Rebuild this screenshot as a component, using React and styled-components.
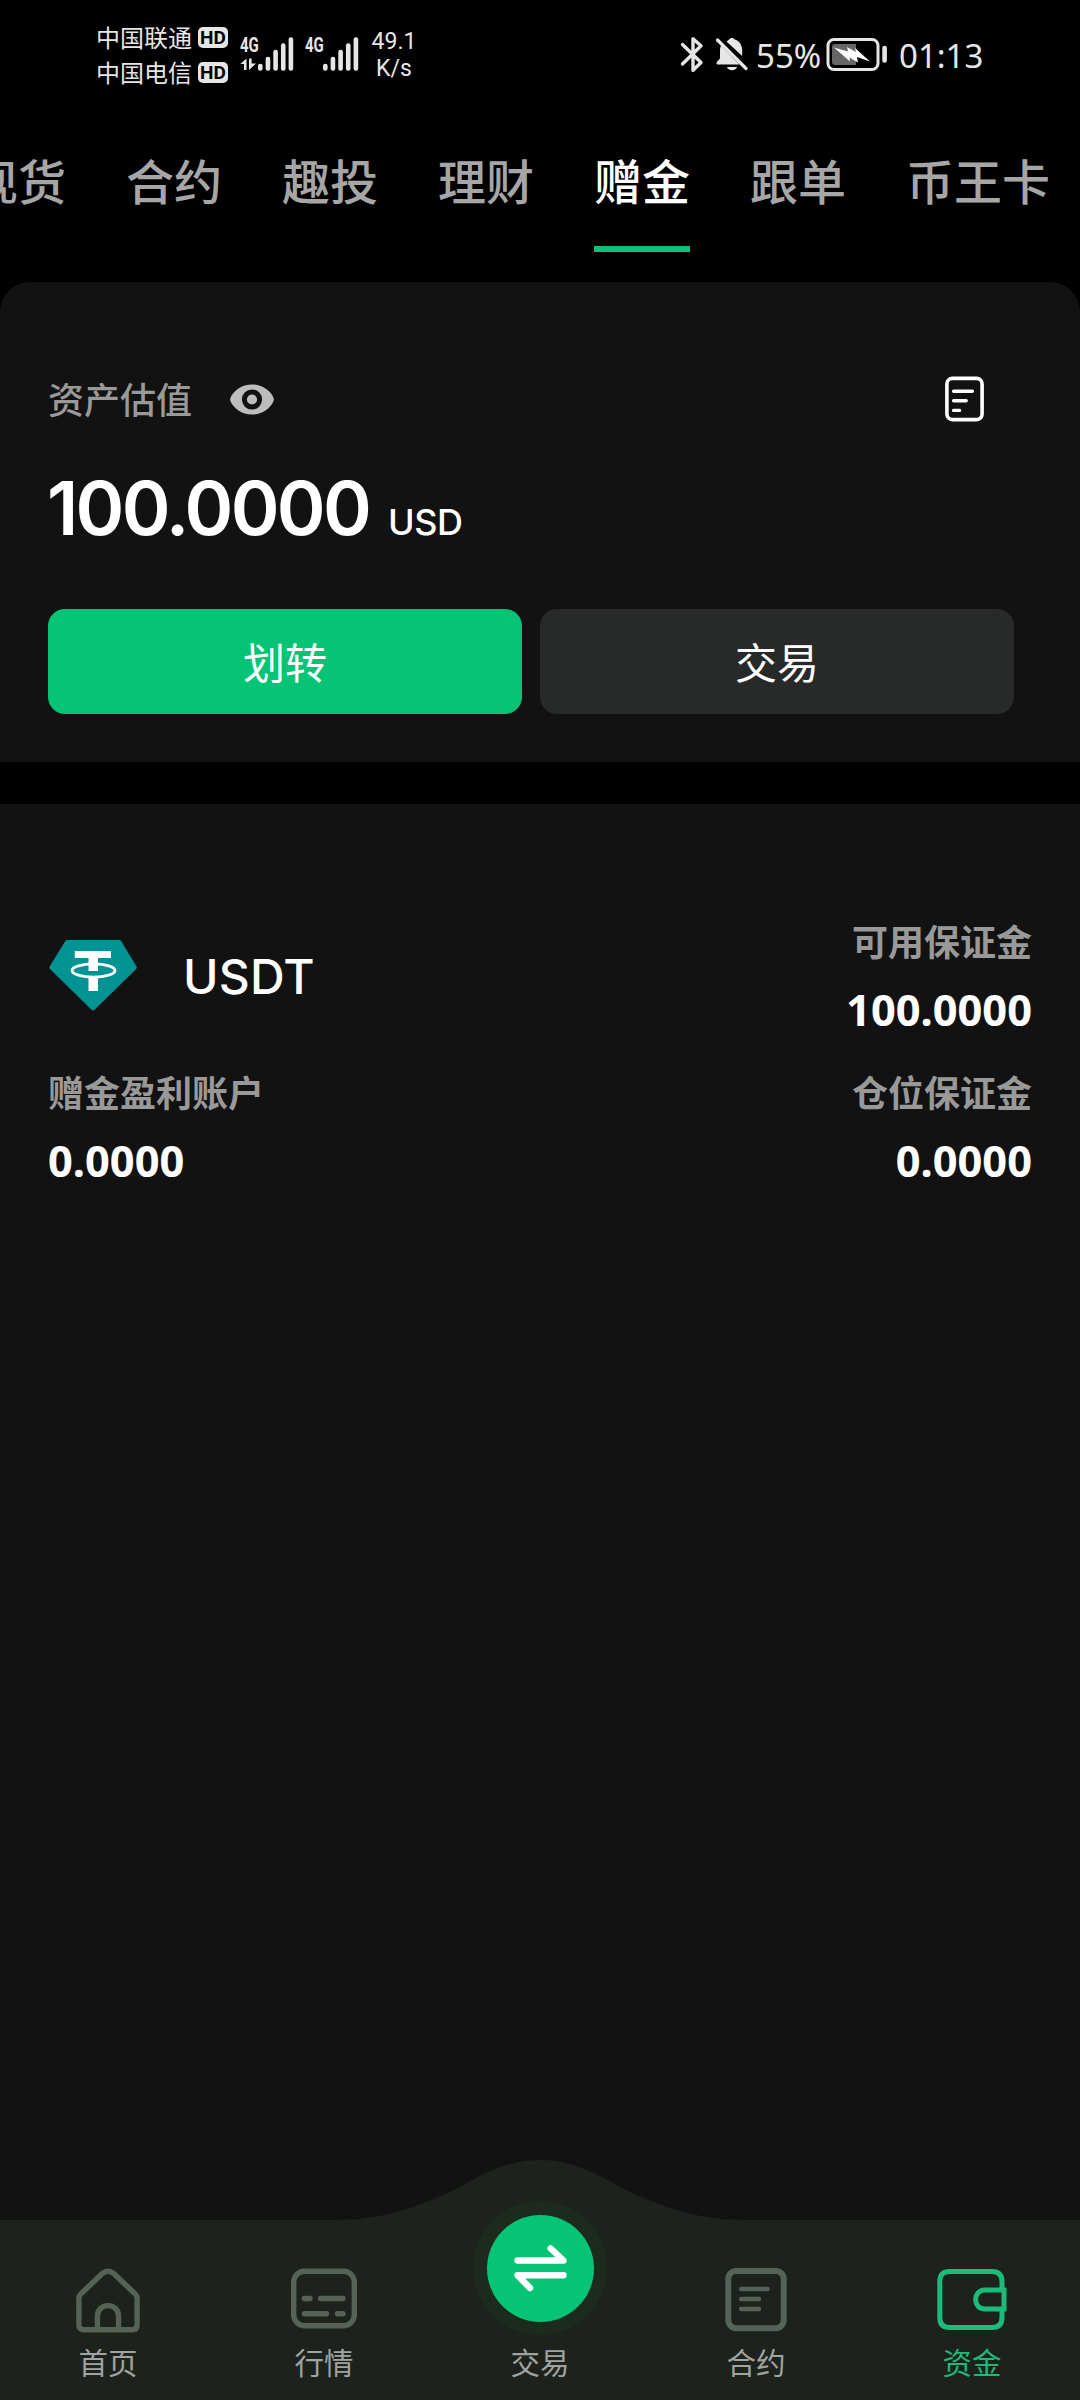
import React, { useState } from 'react';
import styled, { createGlobalStyle } from 'styled-components';

const GlobalStyle = createGlobalStyle`
  * { box-sizing: border-box; }
  body {
    margin: 0;
    background: #000;
    font-family: "Noto Sans CJK SC", sans-serif;
    color: #fff;
  }
  button {
    font-family: inherit;
    border: none;
    padding: 0;
    background: none;
  }
  svg { display: block; flex: none; }
`;

const Page = styled.div`
  width: 1080px;
  height: 2400px;
  display: flex;
  flex-direction: column;
  overflow: hidden;
  background: #000;
`;

const StatusBar = styled.header`
  height: 110px;
  display: flex;
  justify-content: space-between;
  align-items: flex-start;
  padding: 19px 96px 0 96px;
  color: #e6e6e6;
`;

const StatusGroup = styled.div`
  display: flex;
  align-items: flex-start;
`;

const Carriers = styled.div`
  display: flex;
  flex-direction: column;
  margin-right: 12px;
`;

const Carrier = styled.div`
  display: flex;
  align-items: center;
  gap: 6px;
  height: 35px;
  font-size: 24px;
  line-height: 35px;
`;

const HdBadge = styled.span`
  width: 30px;
  height: 21px;
  margin-top: 2px;
  border-radius: 5px;
  background: #e6e6e6;
  color: #000;
  font-family: Roboto, sans-serif;
  font-size: 19px;
  font-weight: 700;
  line-height: 22px;
  text-align: center;
`;

const Signal = styled.div`
  display: flex;
  width: 65px;
  padding-top: 18px;
`;

const SignalLabel = styled.div`
  width: 18px;
  height: 21px;
  font-family: Roboto, sans-serif;
  font-size: 20px;
  font-weight: 700;
  line-height: 16px;
  transform: scaleX(0.75);
  transform-origin: 0 0;
`;

const Speed = styled.div`
  width: 48px;
  padding-top: 10px;
  font-family: Roboto, sans-serif;
  font-size: 23px;
  line-height: 26.5px;
  text-align: center;
`;

const StatusText = styled.span`
  font-family: "Noto Sans", sans-serif;
  font-size: 33px;
  line-height: 34px;
  width: ${props => props.$width}px;
  margin-left: ${props => props.$left}px;
  padding-top: 20px;
  white-space: nowrap;
`;

const StatusIcon = styled.div`
  padding-top: 17px;
  margin-left: ${props => props.$left || 0}px;
`;

const Tabs = styled.nav`
  height: 172px;
  display: flex;
  gap: 60px;
  margin-left: -30px;
  white-space: nowrap;
`;

const Tab = styled.button`
  height: 142px;
  flex: none;
  display: flex;
  flex-direction: column;
  justify-content: space-between;
  padding-top: 34px;
  font-size: 48px;
  font-weight: 500;
  line-height: 70px;
  color: ${props => props.$active ? '#fff' : '#a6a6a6'};
  border-bottom: 6px solid ${props => props.$active ? '#11bf7b' : 'transparent'};
`;

const BalanceCard = styled.section`
  height: 480px;
  flex: none;
  padding: 91px 66px 0 48px;
  background: #121212;
  border-radius: 30px 30px 0 0;
`;

const CardHeader = styled.div`
  height: 52px;
  display: flex;
  align-items: center;
  padding-right: 30px;
`;

const CardTitle = styled.span`
  flex: none;
  font-size: 36px;
  font-weight: 500;
  line-height: 52px;
  color: #999;
  margin: -3px 38px 0 0;
`;

const EyeButton = styled.button`
  margin-top: 1px;
`;

const Spacer = styled.div`
  flex: 1;
`;

const Balance = styled.div`
  display: flex;
  align-items: baseline;
  height: 90px;
  margin: 38px 0 0 -1px;
  font-family: Inter, sans-serif;
`;

const Amount = styled.span`
  font-size: 74px;
  line-height: 90px;
  font-weight: 600;
  letter-spacing: -2.7px;
`;

const Currency = styled.span`
  font-size: 36px;
  font-weight: 500;
  margin-left: 19px;
  letter-spacing: -0.5px;
`;

const Actions = styled.div`
  display: flex;
  gap: 18px;
  margin-top: 56px;
`;

const ActionButton = styled.button`
  flex: 1;
  height: 105px;
  padding-bottom: 2px;
  border-radius: 17px;
  font-size: 42px;
  line-height: 60px;
  color: #fff;
  background: ${props => props.$primary ? '#05c476' : '#282a29'};
`;

const Assets = styled.main`
  flex: 1;
  margin-top: 42px;
  padding: 110px 48px 0;
  background: #121212;
`;

const AssetRow = styled.div`
  height: 151px;
  display: flex;
  justify-content: space-between;
  align-items: flex-start;
`;

const Coin = styled.div`
  display: flex;
  align-items: center;
  gap: 46px;
  padding: 25px 0 0 1px;
`;

const CoinName = styled.span`
  font-family: Inter, sans-serif;
  font-size: 48px;
  line-height: 60px;
  font-weight: 500;
  letter-spacing: 0.2px;
  padding-top: 2px;
`;

const Field = styled.div`
  text-align: ${props => props.$right ? 'right' : 'left'};
`;

const FieldLabel = styled.div`
  font-size: 36px;
  font-weight: 700;
  line-height: 52px;
  color: #999;
`;

const FieldValue = styled.div`
  font-family: "Noto Sans", sans-serif;
  font-size: 43.4px;
  font-weight: 700;
  line-height: 60px;
  margin-top: 14px;
`;

const BottomBar = styled.footer`
  position: relative;
  height: 240px;
  flex: none;
  margin-top: -240px;
`;

const BarShape = styled.svg`
  position: absolute;
  inset: 0;
`;

const BarItems = styled.div`
  position: relative;
  height: 240px;
  display: grid;
  grid-template-columns: repeat(5, 216px);
`;

const BarItem = styled.button`
  display: flex;
  flex-direction: column;
  align-items: center;
  justify-content: flex-end;
  padding-bottom: 17px;
  font-size: 29.5px;
  line-height: 44px;
  color: ${props => props.$active ? '#1fb879' : '#a0a3a0'};
`;

const BarIcon = styled.div`
  height: 71px;
  width: 80px;
  display: flex;
  justify-content: center;
  color: ${props => props.$active ? '#1cbb79' : '#556357'};
`;

const TradeButton = styled.div`
  width: 134px;
  height: 134px;
  display: flex;
  align-items: center;
  justify-content: center;
  margin-bottom: 4px;
  border-radius: 50%;
  background: #1d2b1f;
`;

const TradeCircle = styled.div`
  width: 107px;
  height: 107px;
  border-radius: 50%;
  background: #05c476;
`;

const barHeights = [7, 14, 21, 27.5, 33.5];

const SignalBars = () => (
  <svg width="36" height="34" viewBox="0 0 36 34">
    {barHeights.map((h, i) => (
      <rect key={h} x={i * 7.65} y={33.8 - h} width="4.6" height={h} rx="2.2" fill="#e6e6e6" />
    ))}
  </svg>
);

const DataArrows = () => (
  <svg width="17" height="13" viewBox="0 0 17 13" fill="#e6e6e6">
    <path d="M6.5 0.5V12H4V6H0.3Z" />
    <path d="M9 12V0.5h2.6V5.5H16Z" />
  </svg>
);

const BluetoothIcon = () => (
  <svg width="24" height="37" viewBox="0 0 24 37" fill="none" stroke="#e6e6e6" strokeWidth="3.4" strokeLinecap="round" strokeLinejoin="round">
    <path d="M2.5 8.5 21 26.5 13 34.3V2.7L21 9.8 2.5 28" />
  </svg>
);

const BellOffIcon = () => (
  <svg width="34" height="37" viewBox="0 0 34 37" fill="#e6e6e6">
    <path d="M11.5 5.5C13 4.2 14 3.8 14.6 3.3 15.2 1.6 18.6 1.6 19.3 3.3 25 5 27 9.5 27.2 14.5V20Z" />
    <path d="M6 9.5 24.5 28.5H2.5C1.5 28.5 1 26.5 2.2 25.5L5 22.5V15C5 13 5.2 11.5 6 9.5Z" />
    <path d="M12 31h10c-.8 4.2-9.2 4.2-10 0Z" />
    <path d="M2.5 4 31 32.5" stroke="#e6e6e6" strokeWidth="3.2" strokeLinecap="round" />
  </svg>
);

const BatteryIcon = () => (
  <svg width="62" height="36" viewBox="0 0 62 36">
    <rect x="2" y="3.5" width="50" height="30" rx="6" fill="none" stroke="#e6e6e6" strokeWidth="3" />
    <path d="M9 8H30V29H9a3 3 0 0 1-3-3V11a3 3 0 0 1 3-3Z" fill="#666" />
    <path d="M8 11.5 22 15.5 21 11 30 16 29 12 44 25.5 31 21 32 26.5 23.5 21.5 24 25.5Z" fill="#fff" />
    <rect x="56.3" y="9.8" width="4.6" height="17" rx="2.2" fill="#e6e6e6" />
  </svg>
);

const EyeIcon = () => (
  <svg width="44" height="31" viewBox="0 0 44 31">
    <path d="M22 0.5C11.5 0.5 3.6 6.8 0.6 13.5Q-0.3 15.5 0.6 17.5C3.6 24.2 11.5 30.5 22 30.5S40.4 24.2 43.4 17.5Q44.3 15.5 43.4 13.5C40.4 6.8 32.5 0.5 22 0.5Z" fill="#bdbdbd" />
    <circle cx="22" cy="15.5" r="7.6" fill="#bdbdbd" stroke="#121212" strokeWidth="5" />
  </svg>
);

const RecordsIcon = () => (
  <svg width="39" height="46" viewBox="0 0 39 46" fill="none" stroke="#fff" strokeLinecap="round">
    <rect x="1.9" y="2.4" width="35.2" height="41.2" rx="5.5" strokeWidth="3.6" />
    <path d="M8.6 15.3h18.8M8.6 24.8h12.6M8.6 34.4h6" strokeWidth="3.4" />
  </svg>
);

const TetherIcon = () => (
  <svg width="88" height="73" viewBox="0 0 88 73">
    <path d="M18.5 1H70Q71.5 1 72.3 2.3L87.5 27.5Q88.3 29 87 30.3L45.5 70.8Q44 72.2 42.5 70.8L1 30Q-.2 28.7.7 27.2L16.2 2.3Q17 1 18.5 1Z" fill="#009393" />
    <ellipse cx="44.5" cy="31.5" rx="21.5" ry="6.6" fill="none" stroke="#fff" strokeWidth="2.8" />
    <path d="M25.8 12H62V19H49V32H39.5V19H25.8Z M39.5 37H49V52H39.5Z" fill="#fff" />
  </svg>
);

const HomeIcon = () => (
  <svg width="64" height="66" viewBox="0 0 64 66" fill="none" stroke="currentColor" strokeWidth="5.4" strokeLinejoin="round">
    <path d="M2.9 30Q2.9 27.8 4.5 26.2L26 5.8Q32 0.8 38 5.8L59.5 26.2Q61.1 27.8 61.1 30V57Q61.1 61.8 56.3 61.8H7.7Q2.9 61.8 2.9 57Z" />
    <path d="M21.4 61.8V48.5C21.4 34 42.6 34 42.6 48.5V61.8" />
  </svg>
);

const MarketIcon = () => (
  <svg width="66" height="66" viewBox="0 0 66 66" fill="none" stroke="currentColor" strokeWidth="5.4" strokeLinecap="round">
    <rect x="2.7" y="3.2" width="60.6" height="54.6" rx="11" />
    <path d="M13.4 30.5H19M29.6 30.5H52M13.4 45.8H35.5M46.4 45.8H52" />
  </svg>
);

const ContractIcon = () => (
  <svg width="62" height="66" viewBox="0 0 62 66" fill="none" stroke="currentColor" strokeLinecap="round">
    <rect x="3.3" y="2.9" width="55.4" height="57.4" rx="8" strokeWidth="6" />
    <path d="M16.2 21H42.5M16.2 31H34M16.2 41H34" strokeWidth="4.6" />
  </svg>
);

const WalletIcon = () => (
  <svg width="70" height="66" viewBox="0 0 70 66" fill="none" stroke="currentColor" strokeWidth="5">
    <path d="M65 21.5V13.5Q65 3.5 55 3.5H12.5Q2.8 3.5 2.8 13.5V49.5Q2.8 59.5 12.5 59.5H55Q65 59.5 65 49.5V42.5" />
    <path d="M67 22H48C35.5 22 35.5 41 48 41H67Z" />
  </svg>
);

const SwapIcon = () => (
  <svg width="107" height="107" viewBox="0 0 107 107" fill="none" stroke="#fff" strokeWidth="6.4" strokeLinecap="round" strokeLinejoin="round">
    <path d="M30.5 45.5H76.5L63.7 33.5M76.5 60.3H30.5L43 73" />
  </svg>
);

const tabs = ['现货', '合约', '趣投', '理财', '赠金', '跟单', '币王卡'];

const menu = [
  { label: '首页', icon: HomeIcon },
  { label: '行情', icon: MarketIcon },
  { label: '交易', trade: true },
  { label: '合约', icon: ContractIcon },
  { label: '资金', icon: WalletIcon, active: true },
];

const App = () => {
  const [activeTab, setActiveTab] = useState('赠金');
  const [visible, setVisible] = useState(true);

  return (
    <>
      <GlobalStyle />
      <Page>
        <StatusBar>
          <StatusGroup>
            <Carriers>
              <Carrier>中国联通<HdBadge>HD</HdBadge></Carrier>
              <Carrier>中国电信<HdBadge>HD</HdBadge></Carrier>
            </Carriers>
            <Signal>
              <div>
                <SignalLabel>4G</SignalLabel>
                <DataArrows />
              </div>
              <SignalBars />
            </Signal>
            <Signal>
              <SignalLabel>4G</SignalLabel>
              <SignalBars />
            </Signal>
            <Speed>49.1<br />K/s</Speed>
          </StatusGroup>
          <StatusGroup>
            <StatusIcon><BluetoothIcon /></StatusIcon>
            <StatusIcon $left={11}><BellOffIcon /></StatusIcon>
            <StatusText $left={7} $width={70}>55%</StatusText>
            <StatusIcon><BatteryIcon /></StatusIcon>
            <StatusText $left={11} $width={85}>01:13</StatusText>
          </StatusGroup>
        </StatusBar>

        <Tabs>
          {tabs.map(tab => (
            <Tab key={tab} $active={tab === activeTab} onClick={() => setActiveTab(tab)}>
              {tab}
            </Tab>
          ))}
        </Tabs>

        <BalanceCard>
          <CardHeader>
            <CardTitle>资产估值</CardTitle>
            <EyeButton onClick={() => setVisible(!visible)}><EyeIcon /></EyeButton>
            <Spacer />
            <RecordsIcon />
          </CardHeader>
          <Balance>
            <Amount>{visible ? '100.0000' : '******'}</Amount>
            <Currency>USD</Currency>
          </Balance>
          <Actions>
            <ActionButton $primary>划转</ActionButton>
            <ActionButton>交易</ActionButton>
          </Actions>
        </BalanceCard>

        <Assets>
          <AssetRow>
            <Coin>
              <TetherIcon />
              <CoinName>USDT</CoinName>
            </Coin>
            <Field $right>
              <FieldLabel>可用保证金</FieldLabel>
              <FieldValue>100.0000</FieldValue>
            </Field>
          </AssetRow>
          <AssetRow>
            <Field>
              <FieldLabel>赠金盈利账户</FieldLabel>
              <FieldValue>0.0000</FieldValue>
            </Field>
            <Field $right>
              <FieldLabel>仓位保证金</FieldLabel>
              <FieldValue>0.0000</FieldValue>
            </Field>
          </AssetRow>
        </Assets>

        <BottomBar>
          <BarShape width="1080" height="240" viewBox="0 0 1080 240">
            <path d="M0 60H335C385 60 425 45 463 25C490 10 512 0 540 0S590 10 617 25C655 45 695 60 745 60H1080V240H0Z" fill="#1d221d" />
          </BarShape>
          <BarItems>
            {menu.map(({ label, icon: Icon, trade, active }) => (
              <BarItem key={label} $active={active}>
                {trade ? (
                  <TradeButton>
                    <TradeCircle><SwapIcon /></TradeCircle>
                  </TradeButton>
                ) : (
                  <BarIcon $active={active}><Icon /></BarIcon>
                )}
                {label}
              </BarItem>
            ))}
          </BarItems>
        </BottomBar>
      </Page>
    </>
  );
};

export default App;
